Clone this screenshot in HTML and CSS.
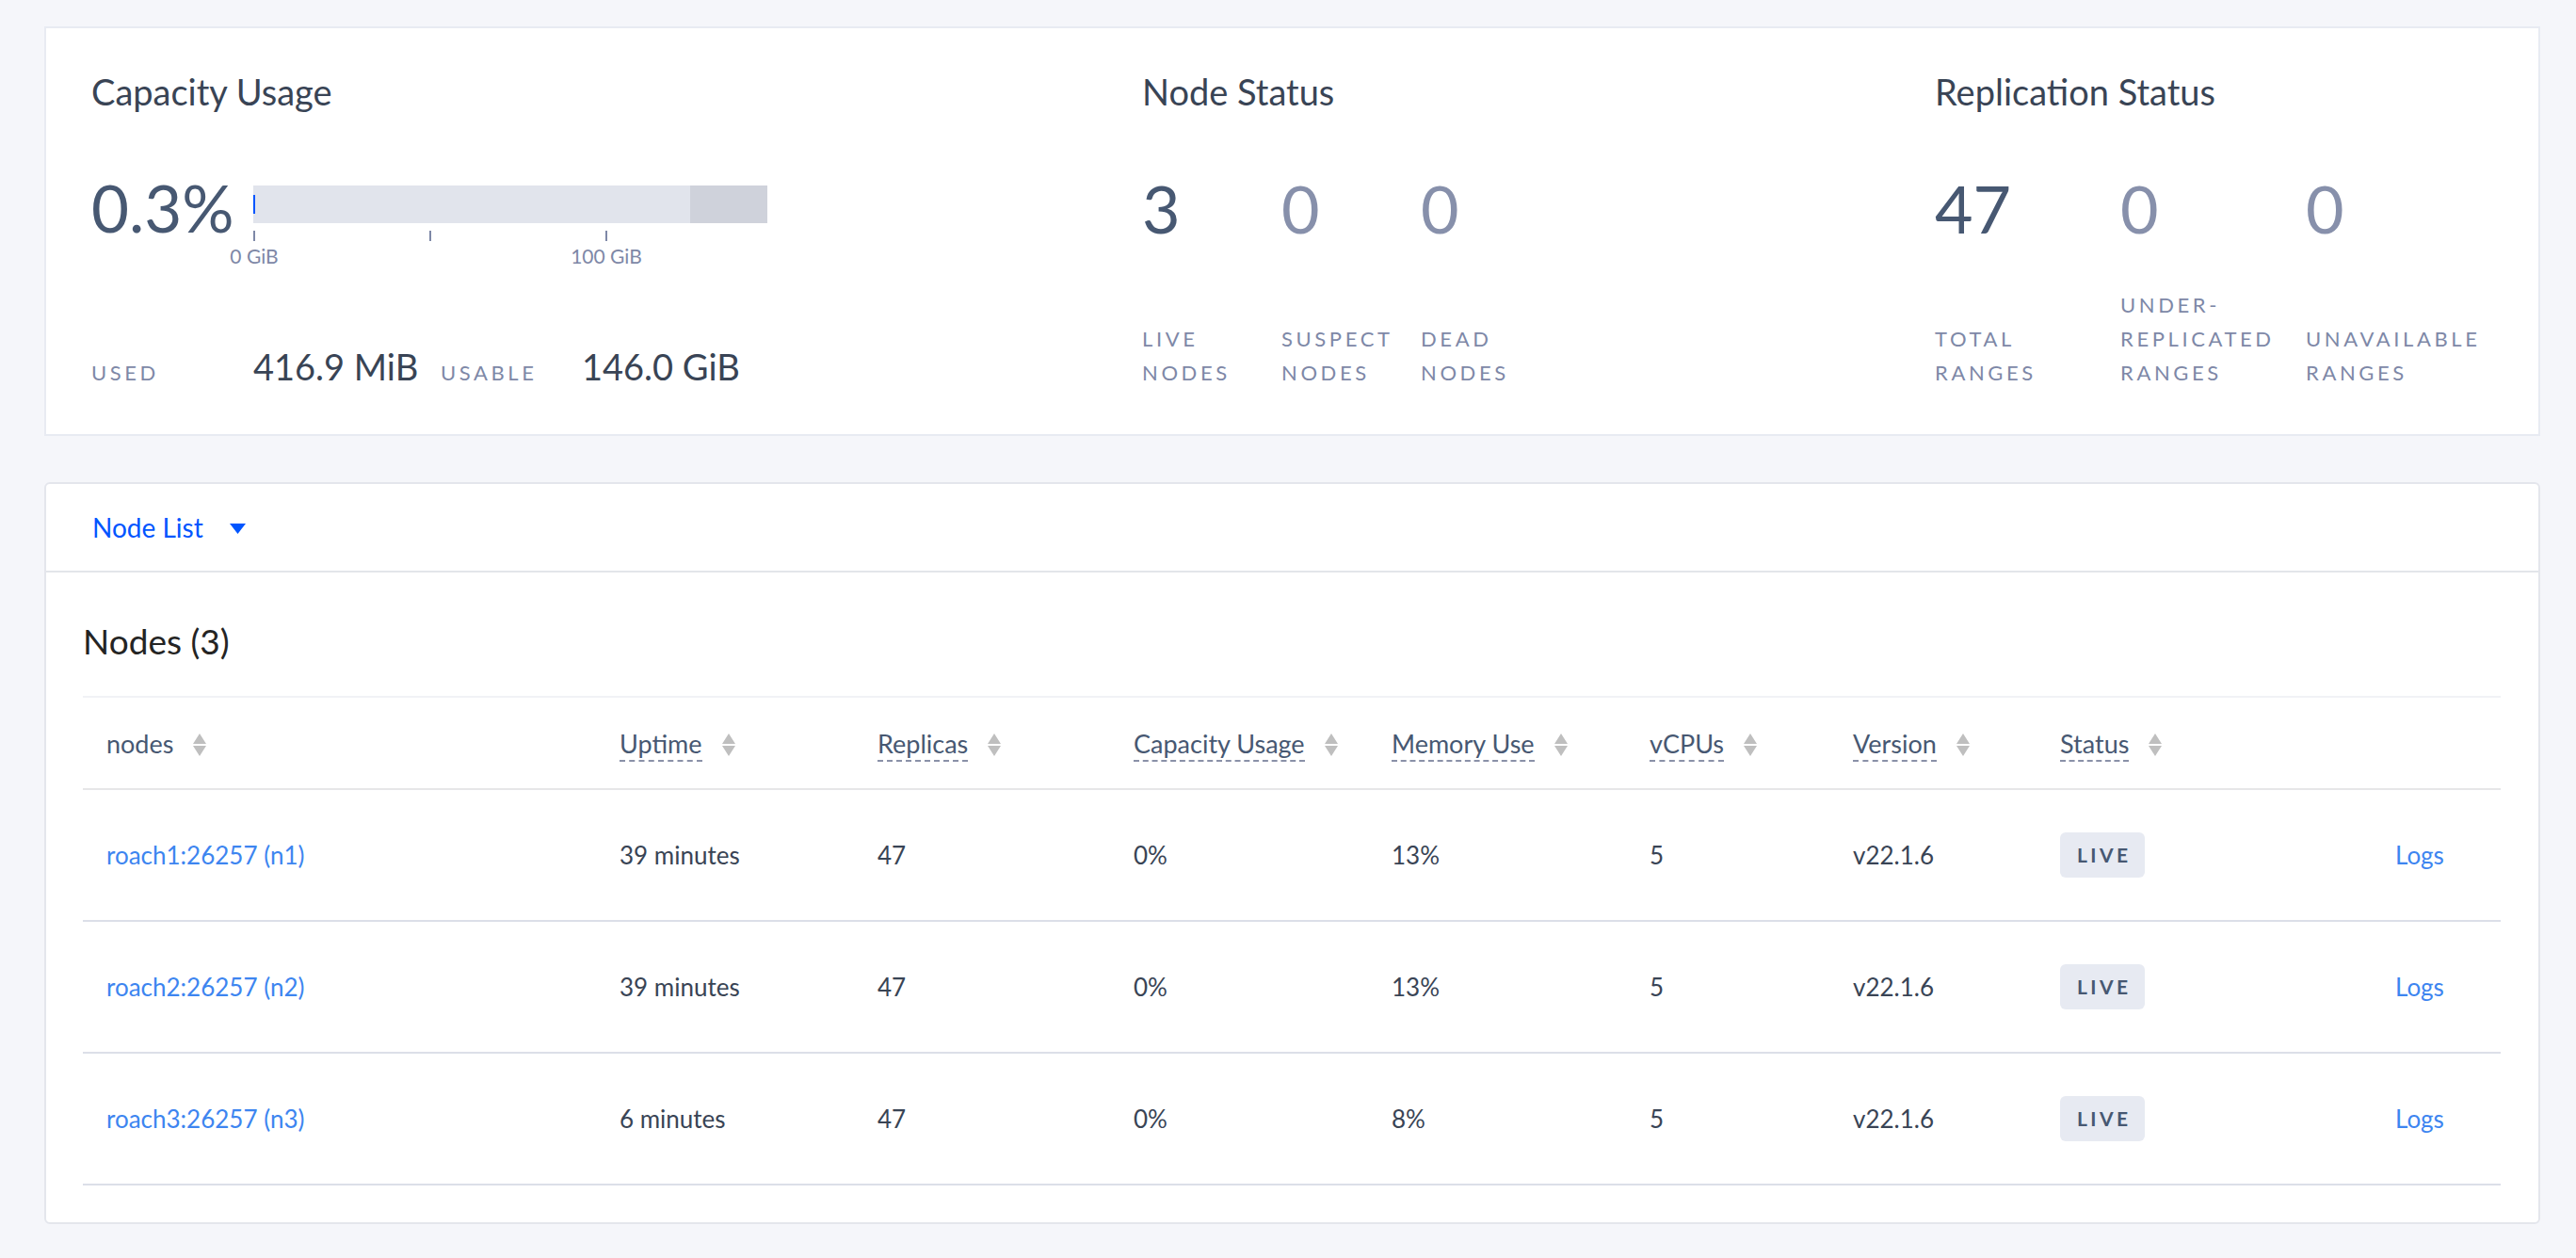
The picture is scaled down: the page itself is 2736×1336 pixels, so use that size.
FILE: index.html
```html
<!DOCTYPE html>
<html lang="en">
<head>
<meta charset="utf-8">
<title>Cluster Overview</title>
<link rel="stylesheet" href="styles.css">
</head>
<body>
<main class="page">
  <section class="summary">
    <div class="sect capacity">
      <h2 class="sect-title">Capacity Usage</h2>
      <div class="cap-row">
        <div class="cap-pct">0.3%</div>
        <div class="cap-chart">
          <div class="cap-bar">
            <span class="cap-used"></span>
            <span class="cap-rest"></span>
          </div>
          <div class="cap-axis">
            <span class="tick" style="left:0px"></span>
            <span class="tick" style="left:187px"></span>
            <span class="tick" style="left:374px"></span>
            <span class="tick-label" style="left:0px">0 GiB</span>
            <span class="tick-label" style="left:374px">100 GiB</span>
          </div>
        </div>
      </div>
      <div class="cap-foot">
        <span class="label used-label">Used</span>
        <span class="cap-value used-value">416.9 MiB</span>
        <span class="label usable-label">Usable</span>
        <span class="cap-value">146.0 GiB</span>
      </div>
    </div>

    <div class="sect">
      <h2 class="sect-title">Node Status</h2>
      <div class="stats">
        <div class="stat stat-node">
          <div class="stat-num strong">3</div>
          <div class="label">Live<br>Nodes</div>
        </div>
        <div class="stat stat-node">
          <div class="stat-num">0</div>
          <div class="label">Suspect<br>Nodes</div>
        </div>
        <div class="stat stat-node">
          <div class="stat-num">0</div>
          <div class="label">Dead<br>Nodes</div>
        </div>
      </div>
    </div>

    <div class="sect">
      <h2 class="sect-title">Replication Status</h2>
      <div class="stats">
        <div class="stat stat-repl">
          <div class="stat-num strong">47</div>
          <div class="label">Total<br>Ranges</div>
        </div>
        <div class="stat stat-repl">
          <div class="stat-num">0</div>
          <div class="label">Under-<br>Replicated<br>Ranges</div>
        </div>
        <div class="stat stat-repl">
          <div class="stat-num">0</div>
          <div class="label">Unavailable<br>Ranges</div>
        </div>
      </div>
    </div>
  </section>

  <section class="nodes-card">
    <header class="nodes-head">
      <span class="view-select">Node List</span>
      <svg class="caret" width="17" height="11" viewBox="0 0 17 11"><path d="M0 0 H17 L8.5 11 Z" fill="#0055ff"/></svg>
    </header>
    <div class="nodes-body">
      <h3 class="nodes-title">Nodes (3)</h3>
      <table class="grid">
        <colgroup>
          <col class="c1"><col class="c2"><col class="c3"><col class="c4"><col class="c5"><col class="c6"><col class="c7"><col class="c8"><col class="c9">
        </colgroup>
        <thead>
          <tr>
            <th><span class="th-plain">nodes</span><svg class="sort" width="14" height="24" viewBox="0 0 14 24"><path d="M7 0 L14 11 L0 11 Z M0 13 H14 L7 24 Z" fill="#bfbfbf"/></svg></th>
            <th><span class="th-tip">Uptime</span><svg class="sort" width="14" height="24" viewBox="0 0 14 24"><path d="M7 0 L14 11 L0 11 Z M0 13 H14 L7 24 Z" fill="#bfbfbf"/></svg></th>
            <th><span class="th-tip">Replicas</span><svg class="sort" width="14" height="24" viewBox="0 0 14 24"><path d="M7 0 L14 11 L0 11 Z M0 13 H14 L7 24 Z" fill="#bfbfbf"/></svg></th>
            <th><span class="th-tip">Capacity Usage</span><svg class="sort" width="14" height="24" viewBox="0 0 14 24"><path d="M7 0 L14 11 L0 11 Z M0 13 H14 L7 24 Z" fill="#bfbfbf"/></svg></th>
            <th><span class="th-tip">Memory Use</span><svg class="sort" width="14" height="24" viewBox="0 0 14 24"><path d="M7 0 L14 11 L0 11 Z M0 13 H14 L7 24 Z" fill="#bfbfbf"/></svg></th>
            <th><span class="th-tip">vCPUs</span><svg class="sort" width="14" height="24" viewBox="0 0 14 24"><path d="M7 0 L14 11 L0 11 Z M0 13 H14 L7 24 Z" fill="#bfbfbf"/></svg></th>
            <th><span class="th-tip">Version</span><svg class="sort" width="14" height="24" viewBox="0 0 14 24"><path d="M7 0 L14 11 L0 11 Z M0 13 H14 L7 24 Z" fill="#bfbfbf"/></svg></th>
            <th><span class="th-tip">Status</span><svg class="sort" width="14" height="24" viewBox="0 0 14 24"><path d="M7 0 L14 11 L0 11 Z M0 13 H14 L7 24 Z" fill="#bfbfbf"/></svg></th>
            <th></th>
          </tr>
        </thead>
        <tbody>
          <tr>
            <td><a class="link" href="#">roach1:26257 (n1)</a></td>
            <td>39 minutes</td>
            <td>47</td>
            <td>0%</td>
            <td>13%</td>
            <td>5</td>
            <td>v22.1.6</td>
            <td><span class="badge">LIVE</span></td>
            <td><a class="link" href="#">Logs</a></td>
          </tr>
          <tr>
            <td><a class="link" href="#">roach2:26257 (n2)</a></td>
            <td>39 minutes</td>
            <td>47</td>
            <td>0%</td>
            <td>13%</td>
            <td>5</td>
            <td>v22.1.6</td>
            <td><span class="badge">LIVE</span></td>
            <td><a class="link" href="#">Logs</a></td>
          </tr>
          <tr>
            <td><a class="link" href="#">roach3:26257 (n3)</a></td>
            <td>6 minutes</td>
            <td>47</td>
            <td>0%</td>
            <td>8%</td>
            <td>5</td>
            <td>v22.1.6</td>
            <td><span class="badge">LIVE</span></td>
            <td><a class="link" href="#">Logs</a></td>
          </tr>
        </tbody>
      </table>
    </div>
  </section>
</main>
</body>
</html>
```

FILE: styles.css
```css
* { box-sizing: border-box; }

html, body {
  margin: 0;
  background: #f5f6fa;
  font-family: Lato, "Noto Sans", sans-serif;
  color: #394455;
}

.page {
  padding: 28px 38px 36px 47px;
}

/* ---------- summary card ---------- */
.summary {
  height: 435px;
  background: #fff;
  border: 2px solid #e8ebf2;
  display: grid;
  grid-template-columns: 1116px 842px 1fr;
  padding-left: 48px;
}

.sect {
  display: flex;
  flex-direction: column;
  padding: 44px 0 47px;
  min-height: 0;
}

.sect-title {
  margin: 0;
  font-size: 38px;
  line-height: 46px;
  font-weight: 400;
  color: #394455;
}

.label {
  font-size: 22px;
  line-height: 36px;
  letter-spacing: 3.6px;
  text-transform: uppercase;
  color: #7e88a7;
}

/* capacity */
.cap-row {
  display: flex;
  margin-top: 67px;
  height: 68px;
}

.cap-pct {
  width: 172px;
  font-size: 69px;
  line-height: 68px;
  color: #475872;
}

.cap-chart {
  width: 546px;
  padding-top: 10px;
}

.cap-bar {
  position: relative;
  height: 40px;
  background: #e1e4ec;
  display: flex;
  justify-content: space-between;
}

.cap-used {
  width: 2px;
  height: 20px;
  margin-top: 10px;
  background: #0055ff;
}

.cap-rest {
  width: 82px;
  background: #cfd2db;
}

.cap-axis {
  position: relative;
  height: 50px;
  margin-top: 8px;
}

.tick {
  position: absolute;
  top: 0;
  width: 2px;
  height: 11px;
  background: #7e88a7;
}

.tick-label {
  position: absolute;
  top: 15px;
  transform: translateX(-50%);
  margin-left: 1px;
  font-size: 21px;
  line-height: 24px;
  color: #7e88a7;
  white-space: nowrap;
}

.cap-foot {
  margin-top: auto;
  display: flex;
  align-items: baseline;
  line-height: 36px;
}

.used-label { width: 172px; }
.usable-label { width: 150px; }

.cap-value {
  font-size: 38px;
  color: #394455;
}

.used-value { width: 199px; }

/* stats */
.stats {
  flex: 1;
  display: flex;
  margin-top: 67px;
}

.stat {
  display: flex;
  flex-direction: column;
}

.stat-node { width: 148px; }
.stat-repl { width: 197px; }

.stat-num {
  font-size: 70px;
  line-height: 68px;
  color: #8790ab;
}

.stat-num.strong { color: #475872; }

.stat .label { margin-top: auto; }

/* ---------- nodes card ---------- */
.nodes-card {
  margin-top: 49px;
  background: #fff;
  border: 2px solid #e4e6ec;
  border-radius: 6px;
}

.nodes-head {
  height: 94px;
  display: flex;
  align-items: center;
  padding-left: 49px;
  border-bottom: 2px solid #e3e5ea;
}

.view-select {
  font-size: 28px;
  line-height: 34px;
  color: #0055ff;
}

.caret {
  margin-left: 28px;
  margin-top: 2px;
}

.nodes-body {
  padding: 51px 40px 39px 39px;
}

.nodes-title {
  margin: 0;
  font-size: 37px;
  line-height: 44px;
  font-weight: 400;
  color: #242424;
}

.grid {
  margin-top: 36px;
  width: 100%;
  table-layout: fixed;
  border-collapse: collapse;
  border-top: 2px solid #f1f2f6;
}

.c1 { width: 545px; }
.c2 { width: 274px; }
.c3 { width: 272px; }
.c4 { width: 274px; }
.c5 { width: 274px; }
.c6 { width: 216px; }
.c7 { width: 220px; }
.c8 { width: 356px; }
.c9 { width: 137px; }

.grid th {
  height: 98px;
  padding: 0 0 0 25px;
  text-align: left;
  font-weight: 400;
  font-size: 27px;
  color: #475872;
  border-bottom: 2px solid #e6e6e8;
  white-space: nowrap;
  vertical-align: middle;
}

.th-tip {
  border-bottom: 2px dashed #8a91a8;
  padding-bottom: 1px;
}

.sort {
  margin-left: 21px;
  vertical-align: -3px;
}

.grid td {
  height: 140px;
  padding: 0 0 0 25px;
  font-size: 26px;
  color: #394455;
  border-bottom: 2px solid #dcdfe8;
  vertical-align: middle;
  white-space: nowrap;
}

.link {
  color: #3d85f0;
  text-decoration: none;
}

.badge {
  display: inline-block;
  height: 48px;
  line-height: 48px;
  padding: 0 15px 0 18px;
  border-radius: 6px;
  background: #e7eaf2;
  color: #475872;
  font-size: 21px;
  font-weight: 700;
  letter-spacing: 3.4px;
}
```
